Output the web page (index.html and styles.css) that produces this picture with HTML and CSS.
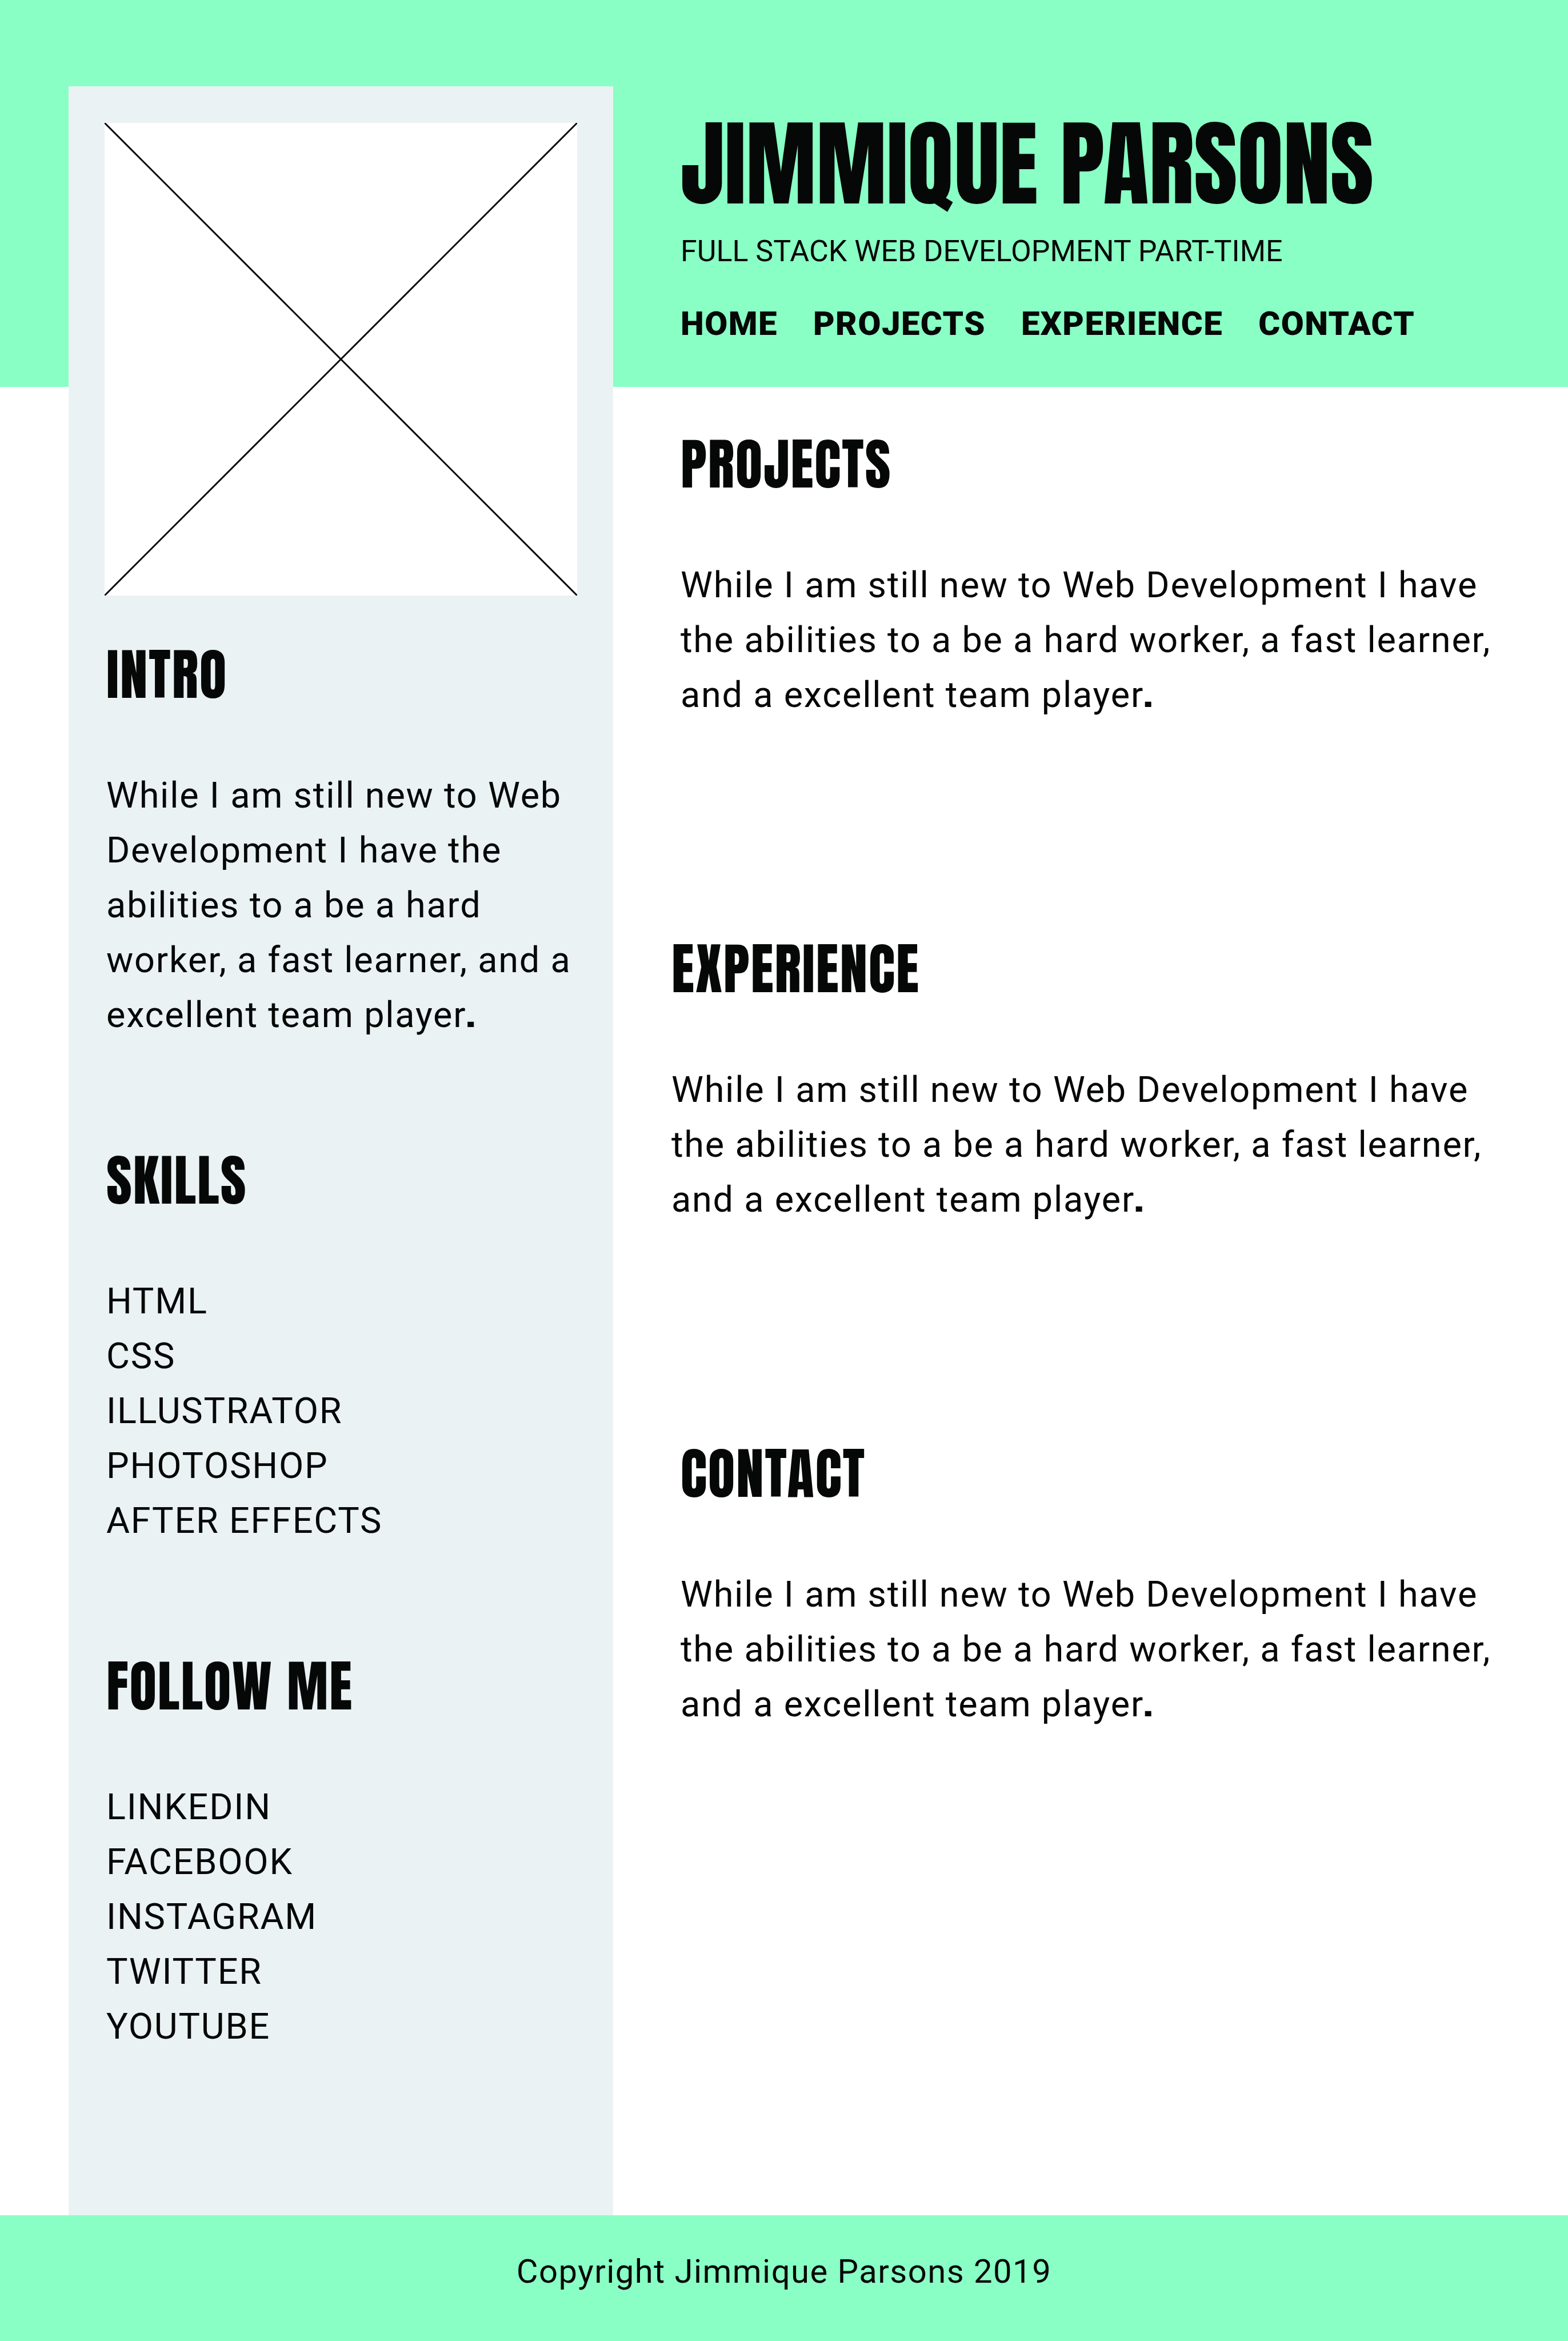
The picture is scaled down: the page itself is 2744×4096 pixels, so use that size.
FILE: index.html
```
<!DOCTYPE html>
<html lang="en">
<head>
  <meta charset="utf-8">
  <meta name="viewport" content="width=device-width, initial-scale=1">
  <title>Jimmique Parsons</title>
  <link rel="stylesheet" href="styles.css">
</head>
<body>
  <header class="banner">
    <div class="banner-content">
      <h1 class="name">JIMMIQUE PARSONS</h1>
      <p class="tagline">FULL STACK WEB DEVELOPMENT PART-TIME</p>
      <nav class="menu" aria-label="Main">
        <a href="#home">HOME</a>
        <a href="#projects">PROJECTS</a>
        <a href="#experience">EXPERIENCE</a>
        <a href="#contact">CONTACT</a>
      </nav>
    </div>
  </header>

  <aside class="sidebar">
    <svg class="portrait" viewBox="0 0 827 827" role="img" aria-label="Portrait placeholder">
      <rect width="827" height="827" fill="#fff"/>
      <path d="M1 1L826 826M826 1L1 826" fill="none" stroke="#060807" stroke-width="3" stroke-linecap="round"/>
    </svg>
    <div class="sidebar-sections">
      <section>
        <h2>INTRO</h2>
        <p>While I am still new to Web Development I have the abilities to a be a hard worker, a fast learner, and a excellent team player<b>.</b></p>
      </section>
      <section>
        <h2>SKILLS</h2>
        <ul>
          <li>HTML</li>
          <li>CSS</li>
          <li>ILLUSTRATOR</li>
          <li>PHOTOSHOP</li>
          <li>AFTER EFFECTS</li>
        </ul>
      </section>
      <section>
        <h2>FOLLOW ME</h2>
        <ul>
          <li><a href="#linkedin">LINKEDIN</a></li>
          <li><a href="#facebook">FACEBOOK</a></li>
          <li><a href="#instagram">INSTAGRAM</a></li>
          <li><a href="#twitter">TWITTER</a></li>
          <li><a href="#youtube">YOUTUBE</a></li>
        </ul>
      </section>
    </div>
  </aside>

  <main class="content">
    <section class="indented" id="projects">
      <h2>PROJECTS</h2>
      <p>While I am still new to Web Development I have the abilities to a be a hard worker, a fast learner, and a excellent team player<b>.</b></p>
    </section>
    <section id="experience">
      <h2>EXPERIENCE</h2>
      <p>While I am still new to Web Development I have the abilities to a be a hard worker, a fast learner, and a excellent team player<b>.</b></p>
    </section>
    <section class="indented" id="contact">
      <h2>CONTACT</h2>
      <p>While I am still new to Web Development I have the abilities to a be a hard worker, a fast learner, and a excellent team player<b>.</b></p>
    </section>
  </main>

  <footer class="footer">Copyright Jimmique Parsons 2019</footer>
</body>
</html>
```
FILE: styles.css
```
* {
  box-sizing: border-box;
  margin: 0;
  padding: 0;
}

body {
  display: grid;
  grid-template-columns: minmax(0, 120fr) minmax(0, 953fr) minmax(0, 1671fr);
  grid-template-rows: auto 1fr auto;
  min-height: 100vh;
  background: #fff;
  color: #060807;
  font-family: Roboto, "Liberation Sans", sans-serif;
  font-size: 63px;
  line-height: 96px;
  letter-spacing: 0.028em;
}

a {
  color: inherit;
  text-decoration: none;
}

ul {
  list-style: none;
}

h1,
h2,
b {
  font-family: Anton, Impact, sans-serif;
  font-weight: 400;
}

b {
  line-height: 1;
}

h2 {
  margin-bottom: 92px;
  font-size: 97px;
  line-height: 144px;
  letter-spacing: 2px;
}

.banner {
  display: grid;
  grid-template-columns: subgrid;
  grid-column: 1 / -1;
  grid-row: 1;
  padding: 204px 0 79px;
  background: #89ffc5;
}

.banner-content {
  grid-column: 3;
  padding-left: 118px;
}

.name {
  margin-bottom: 40px;
  font-size: 165px;
  line-height: 164px;
  letter-spacing: 0;
}

.tagline {
  margin-bottom: 62px;
  font-size: 52px;
  line-height: 64px;
  letter-spacing: 0;
}

.menu {
  display: flex;
  gap: 62px;
  font-size: 58px;
  font-weight: 900;
  line-height: 64px;
  letter-spacing: 0.025em;
}

.sidebar {
  grid-column: 2;
  grid-row: 1 / 3;
  margin-top: 151px;
  padding: 64px 63px;
  background: #eaf2f4;
}

.portrait {
  display: block;
  width: 100%;
  margin-bottom: 66px;
}

.sidebar-sections {
  display: flex;
  flex-direction: column;
  gap: 169px;
  padding-left: 3px;
}

.content {
  display: flex;
  flex-direction: column;
  grid-column: 3;
  grid-row: 2;
  gap: 359px;
  padding: 63px 102px;
}

.indented {
  padding-left: 16px;
}

.footer {
  grid-column: 1 / -1;
  padding: 66px 0 90px;
  background: #89ffc5;
  font-size: 58px;
  line-height: 64px;
  letter-spacing: 0.025em;
  text-align: center;
}
```
